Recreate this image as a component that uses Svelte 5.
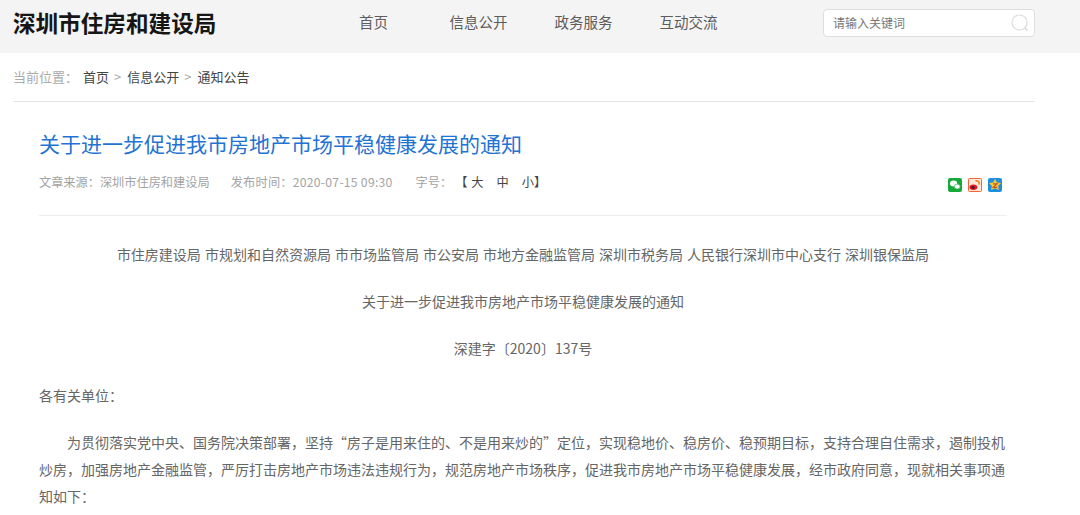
<script>
  const nav = ['首页', '信息公开', '政务服务', '互动交流'];
  const crumbs = ['首页', '信息公开', '通知公告'];
</script>

<div class="page">
  <header class="topbar">
    <h1 class="logo">深圳市住房和建设局</h1>
    <nav class="nav">
      {#each nav as item}
        <span class="nav-item">{item}</span>
      {/each}
    </nav>
    <div class="search">
      <span class="placeholder">请输入关键词</span>
      <svg class="search-icon" viewBox="0 0 18 18" width="18" height="18" aria-hidden="true">
        <circle cx="8.5" cy="8.5" r="7.5" fill="none" stroke="#dcdcdc" stroke-width="1.2" />
        <path d="M14 14l2.6 2.6" fill="none" stroke="#cfcfcf" stroke-width="1.2" />
      </svg>
    </div>
  </header>

  <div class="crumbs">
    <span class="crumb-label">当前位置：</span>
    {#each crumbs as c, i}
      {#if i > 0}<span class="crumb-sep">&gt;</span>{/if}
      <span class="crumb">{c}</span>
    {/each}
  </div>

  <main class="article">
    <h2 class="title">关于进一步促进我市房地产市场平稳健康发展的通知</h2>
    <div class="meta">
      <span class="source">文章来源：深圳市住房和建设局</span>
      <span class="time">发布时间：2020-07-15 09:30</span>
      <span class="size-label">字号：</span>
      <span class="sizes">【<i>大</i><i>中</i><i>小</i>】</span>
      <span class="share">
        <svg viewBox="0 0 14 14" width="14" height="14" aria-label="微信">
          <rect width="14" height="14" rx="2" fill="#17a83a" />
          <ellipse cx="5.6" cy="5.6" rx="3.6" ry="3" fill="#fff" />
          <ellipse cx="9.2" cy="8.6" rx="3" ry="2.5" fill="#fff" stroke="#17a83a" stroke-width=".6" />
        </svg>
        <svg viewBox="0 0 14 14" width="14" height="14" aria-label="微博">
          <rect x=".5" y=".5" width="13" height="13" rx="1" fill="#ffe9d6" stroke="#f4653a" />
          <ellipse cx="5.4" cy="9.2" rx="3.9" ry="2.7" fill="#e6162d" />
          <ellipse cx="5" cy="9.4" rx="1.6" ry="1.2" fill="#222" />
          <path d="M7.500 3c2.600-.6 4.200 1.200 3.700 3.600" fill="none" stroke="#f08a2c" stroke-width="1.8" />
        </svg>
        <svg viewBox="0 0 14 14" width="14" height="14" aria-label="QQ空间">
          <rect width="14" height="14" rx="2" fill="#1d8fe0" />
          <path d="M7 .8l1.900 3.700 4.200.6-3 2.800.8 4.200L7 10.200l-3.900 1.900.8-4.200-3-2.800 4.200-.6z" fill="#fbc52d" />
          <path d="M5 5.800h4L5.300 9.400h3.900" fill="none" stroke="#c8572a" stroke-width="1.200" />
        </svg>
      </span>
    </div>

    <div class="body">
      <p class="center">市住房建设局 市规划和自然资源局 市市场监管局 市公安局 市地方金融监管局 深圳市税务局 人民银行深圳市中心支行 深圳银保监局</p>
      <p class="center">关于进一步促进我市房地产市场平稳健康发展的通知</p>
      <p class="center">深建字〔2020〕137号</p>
      <p>各有关单位：</p>
      <p class="indent">为贯彻落实党中央、国务院决策部署，坚持“房子是用来住的、不是用来炒的”定位，实现稳地价、稳房价、稳预期目标，支持合理自住需求，遏制投机炒房，加强房地产金融监管，严厉打击房地产市场违法违规行为，规范房地产市场秩序，促进我市房地产市场平稳健康发展，经市政府同意，现就相关事项通知如下：</p>
    </div>
  </main>
</div>

<style>
  :global(body) {
    margin: 0;
    background: #fff;
  }
  .page {
    width: 1080px;
    height: 515px;
    overflow: hidden;
    font-family: "Noto Sans CJK SC", "Liberation Sans", sans-serif;
    font-weight: 400;
  }
  .topbar {
    height: 53px;
    background: #f4f4f4;
    display: flex;
    align-items: flex-start;
    padding-left: 13px;
  }
  .logo {
    margin: 12px 0 0;
    width: 308px;
    font-size: 22.600px;
    font-weight: 700;
    color: #161616;
    white-space: nowrap;
    line-height: 1;
  }
  .nav {
    display: flex;
    width: 502px;
    margin-top: 15px;
  }
  .nav-item {
    width: 105px;
    text-align: center;
    font-size: 14.500px;
    color: #5c5c5c;
    line-height: 1;
  }
  .search {
    width: 212px;
    height: 28px;
    margin-top: 9px;
    box-sizing: border-box;
    background: #fff;
    border: 1px solid #dedede;
    border-radius: 4px;
    display: flex;
    align-items: center;
    justify-content: space-between;
    padding: 0 5px 2px 9px;
  }
  .placeholder {
    font-size: 12px;
    color: #777;
  }
  .search-icon {
    display: block;
    position: relative;
    top: 1px;
  }
  .crumbs {
    margin: 0 45px 0 13px;
    height: 48px;
    box-sizing: content-box;
    border-bottom: 1px solid #e6e6e6;
    display: flex;
    align-items: center;
    font-size: 13px;
    color: #444;
    white-space: pre;
  }
  .crumb {
    position: relative;
    top: -1px;
  }
  .crumb-label {
    color: #aaa;
    width: 70px;
    position: relative;
    top: -1px;
  }
  .crumb-sep {
    color: #aaa;
    margin: 0 6px 0 5px;
    position: relative;
    top: -1px;
  }
  .article {
    padding: 0 73px 0 39px;
  }
  .title {
    margin: 26px 0 0;
    font-size: 21px;
    font-weight: 400;
    color: #1f73d2;
    line-height: 30px;
    white-space: nowrap;
  }
  .meta {
    margin-top: 13px;
    height: 45px;
    box-sizing: border-box;
    padding-bottom: 22px;
    border-bottom: 1px solid #ededed;
    display: flex;
    align-items: center;
    font-size: 12.200px;
    color: #a3a3a3;
    white-space: nowrap;
  }
  .time {
    margin-left: 21px;
    letter-spacing: .25px;
  }
  .size-label {
    margin-left: 23px;
  }
  .sizes {
    margin-left: 3px;
    color: #444;
  }
  .sizes i {
    font-style: normal;
    margin-right: 13px;
  }
  .sizes i:first-child {
    margin-left: 4px;
  }
  .sizes i:last-child {
    margin-right: 0;
  }
  .share {
    margin-left: auto;
    margin-right: 5px;
    display: flex;
    gap: 6px;
    position: relative;
    top: 3px;
  }
  .share svg {
    display: block;
  }
  .body {
    padding-top: 25px;
    font-size: 14px;
    line-height: 27px;
    color: #666;
    word-spacing: .9px;
  }
  .body p {
    margin: 0 0 20px;
  }
  .center {
    text-align: center;
  }
  .indent {
    text-indent: 28px;
  }
</style>
